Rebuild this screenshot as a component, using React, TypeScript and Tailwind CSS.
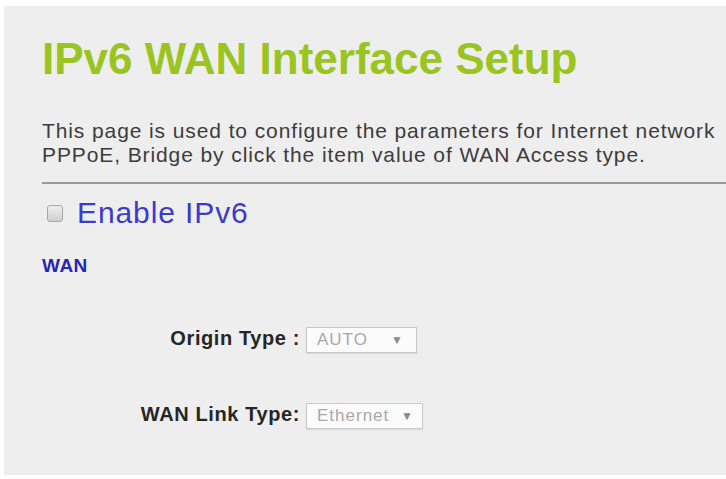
export default function App() {
  return (
    <div className="w-[726px] h-[479px] bg-white pl-[4px] pt-[6px] pb-[4px] flex font-['Liberation_Sans',Arial,sans-serif]">
      <div className="flex-1 bg-[#eeeeee] pl-[38px] pt-[31px] flex flex-col overflow-hidden">
        <h1 className="text-[44px] leading-[44px] font-bold text-[#9ac41f] whitespace-nowrap">
          IPv6 WAN Interface Setup
        </h1>

        <p className="mt-[38px] text-[21px] leading-[24px] tracking-[0.9px] text-[#3c3c3c] whitespace-nowrap">
          This page is used to configure the parameters for Internet network
          <br />
          PPPoE, Bridge by click the item value of WAN Access type.
        </p>

        <div className="mt-[15px] h-[2px] bg-[#9a9a9a]" />

        <label className="mt-[14px] flex items-center h-[30px]">
          <span className="ml-[5px] w-[16px] h-[17px] rounded-[3px] border border-[#a8a8a8] bg-gradient-to-b from-[#efefef] to-[#cfcfcf]" />
          <span className="ml-[14px] text-[30px] leading-[30px] tracking-[0.9px] text-[#3a3acc]">
            Enable IPv6
          </span>
        </label>

        <div className="mt-[28px] text-[19px] leading-[19px] font-bold tracking-[0.5px] text-[#2626b8]">
          WAN
        </div>

        <div className="mt-[52px] flex flex-col gap-[50px]">
          <Row label="Origin Type :" value="AUTO" width="w-[111px]" pad="pr-[13px]" />
          <Row label="WAN Link Type:" value="Ethernet" width="w-[117px]" pad="pr-[9px]" />
        </div>
      </div>
    </div>
  );
}

function Row({ label, value, width, pad }: { label: string; value: string; width: string; pad: string }) {
  return (
    <div className="flex items-start gap-[6px]">
      <div className="w-[258px] text-right text-[20px] leading-[22px] font-bold tracking-[0.6px] text-[#262626]">
        {label}
      </div>
      <div
        className={`${width} ${pad} h-[26px] flex items-center justify-between pl-[10px] border border-[#c9c9c9] bg-[#fbfbfb] shadow-[0_1px_1px_rgba(0,0,0,0.08)]`}
      >
        <span className="text-[17px] tracking-[1px] text-[#a8a8a8]">{value}</span>
        <span className="text-[12px] text-[#8a8a8a]">▼</span>
      </div>
    </div>
  );
}
